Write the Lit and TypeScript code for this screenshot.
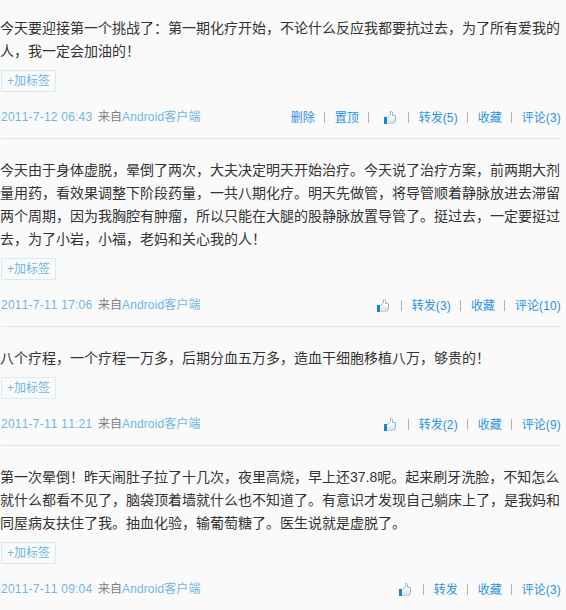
import { LitElement, html, css, svg, nothing } from "lit";
import { customElement, property } from "lit/decorators.js";

interface Post {
  lines: string[];
  time: string;
  own?: boolean;
  forwards?: number;
  comments: number;
}

const POSTS: Post[] = [
  {
    lines: [
      "今天要迎接第一个挑战了：第一期化疗开始，不论什么反应我都要抗过去，为了所有爱我的",
      "人，我一定会加油的！",
    ],
    time: "2011-7-12 06:43",
    own: true,
    forwards: 5,
    comments: 3,
  },
  {
    lines: [
      "今天由于身体虚脱，晕倒了两次，大夫决定明天开始治疗。今天说了治疗方案，前两期大剂",
      "量用药，看效果调整下阶段药量，一共八期化疗。明天先做管，将导管顺着静脉放进去滞留",
      "两个周期，因为我胸腔有肿瘤，所以只能在大腿的股静脉放置导管了。挺过去，一定要挺过",
      "去，为了小岩，小福，老妈和关心我的人！",
    ],
    time: "2011-7-11 17:06",
    forwards: 3,
    comments: 10,
  },
  {
    lines: ["八个疗程，一个疗程一万多，后期分血五万多，造血干细胞移植八万，够贵的！"],
    time: "2011-7-11 11:21",
    forwards: 2,
    comments: 9,
  },
  {
    lines: [
      "第一次晕倒！昨天闹肚子拉了十几次，夜里高烧，早上还37.8呢。起来刷牙洗脸，不知怎么",
      "就什么都看不见了，脑袋顶着墙就什么也不知道了。有意识才发现自己躺床上了，是我妈和",
      "同屋病友扶住了我。抽血化验，输葡萄糖了。医生说就是虚脱了。",
    ],
    time: "2011-7-11 09:04",
    comments: 3,
  },
];

const thumb = svg`
  <defs>
    <linearGradient id="hand" x1="0" y1="0" x2="0" y2="1">
      <stop offset="0.4" stop-color="#fff"/>
      <stop offset="1" stop-color="#d5dbe2"/>
    </linearGradient>
  </defs>
  <path d="M3.5 12.5 V6.5 L5 5.5 L6.5 3.5 V0.5 H7.8 L8.5 1.5 V4.5 H11.2 L11.5 5 V8 L10.5 12 L10 12.5 Z"
    fill="url(#hand)"/>
  <path d="M3.5 6.5 L5 5.5 L6.5 3.5 V0.5 H7.8 L8.5 1.5 V4.5 H11.2 L11.5 5 V8 L10.6 12"
    fill="none" stroke="#86b8d8"/>
  <path d="M3.5 12.5 H10.2" fill="none" stroke="#c5d0da"/>
  <path d="M0 6 H3 V13 H0 Z" fill="#0f87d2"/>`;

@customElement("post-item")
class PostItem extends LitElement {
  @property({ attribute: false }) post!: Post;

  static styles = css`
    :host { display: block; padding-top: 20px; }
    .line {
      height: 23px;
      line-height: 23px;
      font-size: 14px;
      color: #333;
      white-space: nowrap;
    }
    .body { margin-bottom: 7px; }
    .tag {
      box-sizing: border-box;
      width: 55px;
      height: 22px;
      margin-left: 1px;
      padding-left: 5px;
      border: 1px solid #d3ecf8;
      font-size: 12px;
      line-height: 20px;
      color: #6eb6e3;
      white-space: nowrap;
    }
    .meta {
      box-sizing: border-box;
      height: 46px;
      margin: 0 5px 0 1px;
      padding-top: 15px;
      display: flex;
      justify-content: space-between;
      font-size: 12px;
      line-height: 20px;
      white-space: nowrap;
    }
    .info { display: flex; color: #808080; }
    .time { width: 97px; letter-spacing: 0.22px; font-kerning: none; }
    .link { color: #6eb6e3; }
    .client { letter-spacing: 0.12px; }
    .actions { display: flex; align-items: center; height: 20px; padding-top: 1px; color: #2b92e0; }
    .count { letter-spacing: 0.15px; }
    .sep { width: 1px; height: 11px; margin: 0 10px 1px 9px; background: #b3b3b3; }
    .thumb { display: block; width: 12px; height: 13px; margin: 0 3px 1px 5px; }
  `;

  render() {
    const p = this.post;
    const sep = html`<span class="sep"></span>`;
    const count = (n?: number) => (n ? html`<span class="count">(${n})</span>` : nothing);
    return html`
      <div class="body">${p.lines.map((l) => html`<div class="line">${l}</div>`)}</div>
      <div class="tag">+加标签</div>
      <div class="meta">
        <div class="info">
          <span class="time link">${p.time}</span><span>来自</span><span class="client link">Android客户端</span>
        </div>
        <div class="actions">
          ${p.own ? html`<span>删除</span>${sep}<span>置顶</span>${sep}` : nothing}
          <svg class="thumb" viewBox="0 0 12 13">${thumb}</svg>${sep}
          <span>转发${count(p.forwards)}</span>${sep}
          <span>收藏</span>${sep}
          <span>评论${count(p.comments)}</span>
        </div>
      </div>
    `;
  }
}

@customElement("app-root")
class AppRoot extends LitElement {
  static styles = css`
    :host {
      display: block;
      box-sizing: border-box;
      height: 610px;
      padding-top: 17px;
      overflow: hidden;
      background: #fafafa;
      font-family: "Liberation Sans", "Noto Sans CJK SC", sans-serif;
    }
    .first { padding-top: 0; }
    .rule { height: 1px; margin: 0 5px 0 1px; background: #e5e5e5; }
  `;

  render() {
    return POSTS.map(
      (p, i) => html`
        ${i ? html`<div class="rule"></div>` : nothing}
        <post-item class=${i ? "" : "first"} lang="zh-CN" .post=${p}></post-item>
      `
    );
  }
}
